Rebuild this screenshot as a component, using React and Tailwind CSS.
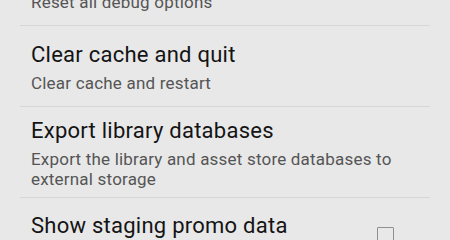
export default function App() {
  const font = { fontFamily: "Roboto, 'Noto Sans', sans-serif" };
  return (
    <div className="w-[450px] h-[240px] overflow-hidden bg-[#e8e8e8]" style={font}>
      <div className="flex flex-col">
        <div className="px-[31px] mt-[-8px] pb-[13px] text-[17px] leading-[20px] tracking-[0.2px] text-[#555555]">
          Reset all debug options
        </div>
        <div className="mx-[20px] h-px bg-[#d6d6d6]" />
        <div className="px-[31px] pt-[15px] pb-[13px] flex flex-col gap-[4px]">
          <div className="text-[22px] leading-[28px] tracking-[0.25px] text-[#141414]">Clear cache and quit</div>
          <div className="text-[17px] leading-[20px] tracking-[0.2px] text-[#555555]">Clear cache and restart</div>
        </div>
        <div className="mx-[20px] h-px bg-[#d6d6d6]" />
        <div className="px-[31px] pt-[10px] pb-[8px] flex flex-col gap-[4px]">
          <div className="text-[22px] leading-[28px] tracking-[0.25px] text-[#141414]">Export library databases</div>
          <div className="text-[17px] leading-[20px] tracking-[0.2px] text-[#555555] pr-[20px]">
            Export the library and asset store databases to external storage
          </div>
        </div>
        <div className="mx-[20px] h-px bg-[#d6d6d6]" />
        <div className="pl-[31px] pr-[56px] pt-[14px] flex items-start justify-between">
          <div className="text-[22px] leading-[28px] tracking-[0.25px] text-[#141414]">Show staging promo data</div>
          <div className="mt-[15px] w-[17px] h-[17px] border-[1.5px] border-[#8f8f8f] rounded-[1px]" />
        </div>
      </div>
    </div>
  );
}
